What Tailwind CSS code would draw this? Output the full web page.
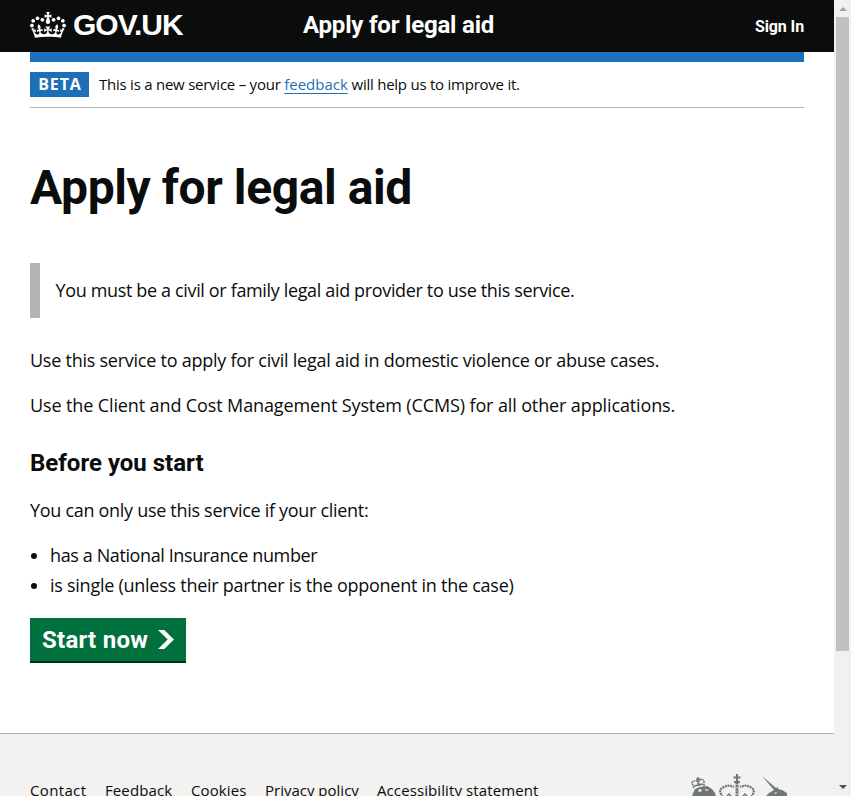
<!DOCTYPE html>
<html lang="en">
<head>
<meta charset="utf-8">
<title>Apply for legal aid</title>
<script src="https://cdn.jsdelivr.net/npm/@tailwindcss/browser@4"></script>
</head>
<body class="flex h-[796px] w-[851px] overflow-hidden bg-white font-['Open_Sans',sans-serif] text-[18px] leading-[25px] text-[#0b0c0c]">
<div class="flex w-[834px] shrink-0 flex-col">
  <header class="h-[52px] shrink-0 bg-[#0b0c0c] px-[30px] text-white">
    <div class="flex h-full items-start">
      <a class="flex w-[273px] shrink-0 items-start whitespace-nowrap">
        <svg class="mt-[12px] h-[26px] w-[36px] shrink-0" viewBox="0 0 132 97" preserveAspectRatio="none" fill="currentColor"><path fill-rule="evenodd" d="M25 30.2c3.5 1.5 7.7-.2 9.1-3.7 1.5-3.6-.2-7.8-3.9-9.2-3.6-1.4-7.6.3-9.1 3.9-1.4 3.5.3 7.5 3.9 9zM9 39.5c3.6 1.5 7.8-.2 9.2-3.7 1.5-3.6-.2-7.8-3.9-9.1-3.6-1.5-7.6.2-9.1 3.8-1.4 3.5.3 7.5 3.8 9zM4.4 57.2c3.5 1.5 7.7-.2 9.1-3.8 1.5-3.6-.2-7.7-3.9-9.1-3.5-1.5-7.6.3-9.1 3.8-1.4 3.5.3 7.6 3.9 9.1zm38.3-21.4c3.5 1.5 7.7-.2 9.1-3.8 1.5-3.6-.2-7.7-3.9-9.1-3.6-1.5-7.6.3-9.1 3.8-1.3 3.6.4 7.7 3.9 9.1zm64.4-5.6c-3.6 1.5-7.8-.2-9.1-3.7-1.5-3.6.2-7.8 3.8-9.2 3.6-1.4 7.7.3 9.2 3.9 1.3 3.5-.4 7.5-3.9 9zm15.9 9.3c-3.6 1.5-7.7-.2-9.1-3.7-1.5-3.6.2-7.8 3.7-9.1 3.6-1.5 7.7.2 9.2 3.8 1.5 3.5-.3 7.5-3.8 9zm4.7 17.7c-3.6 1.5-7.8-.2-9.2-3.8-1.5-3.6.2-7.7 3.9-9.1 3.6-1.5 7.7.3 9.2 3.8 1.3 3.5-.4 7.6-3.9 9.1zM89.3 35.8c-3.6 1.5-7.8-.2-9.2-3.8-1.4-3.6.2-7.7 3.9-9.1 3.6-1.5 7.7.3 9.2 3.8 1.4 3.6-.3 7.7-3.9 9.1zM69.7 17.7l8.9 4.7V9.3l-8.9 2.8c-.2-.3-.5-.6-.9-.9L72.4 0H59.6l3.5 11.2c-.3.3-.6.5-.9.9l-8.8-2.8v13.1l8.8-4.7c.3.3.6.7.9.9l-5 15.4v.1c-.2.8-.4 1.6-.4 2.4 0 4.1 3.1 7.5 7 8.1h.2c.3 0 .7.1 1 .1.4 0 .7 0 1-.1h.2c4-.6 7.1-4.1 7.1-8.1 0-.8-.1-1.7-.4-2.4V34l-5.1-15.4c.4-.2.7-.6 1-.9zM66 92.8c16.9 0 32.8 1.1 47.1 3.2 4-16.9 8.9-26.7 14-33.5l-9.6-3.4c1 4.9 1.1 7.2 0 10.2-1.5-1.4-3-4.3-4.2-8.7L108.6 76c2.8-2 5-3.2 7.5-3.3-4.4 9.4-10 11.9-13.6 11.2-4.3-.8-6.3-4.6-5.6-7.9 1-4.7 5.7-5.9 8-.5 4.3-8.7-3-11.4-7.6-8.8 7.1-7.2 7.9-13.5 2.1-21.1-8 6.1-8.1 12.3-4.5 20.8-4.7-5.4-12.1-2.5-9.5 6.2 3.4-5.2 7.9-2 7.2 3.1-.6 4.3-6.4 7.8-13.5 7.2-10.3-.9-10.9-8-11.2-13.8 2.5-.5 7.1 1.8 11 7.3L80.2 60c-4.1 4.4-8 5.3-12.3 5.4 1.4-4.4 8-11.6 8-11.6H55.5s6.4 7.2 7.9 11.6c-4.2-.1-8-1-12.3-5.4l1.4 16.4c3.9-5.5 8.5-7.7 10.9-7.3-.3 5.8-.9 12.8-11.1 13.8-7.2.6-12.9-2.9-13.5-7.2-.7-5 3.8-8.3 7.1-3.1 2.7-8.7-4.6-11.6-9.4-6.2 3.7-8.5 3.6-14.7-4.6-20.8-5.8 7.6-5 13.9 2.2 21.1-4.7-2.6-11.9.1-7.7 8.8 2.3-5.5 7.1-4.2 8.1.5.7 3.3-1.3 7.1-5.7 7.9-3.5.7-9-1.8-13.5-11.2 2.5.1 4.7 1.3 7.5 3.3l-4.7-15.4c-1.2 4.4-2.7 7.2-4.3 8.7-1.1-3-.9-5.3 0-10.2l-9.5 3.4c5 6.9 9.9 16.7 14 33.5 14.8-2.1 30.8-3.2 47.7-3.2z"/></svg>
        <span class="ml-[7px] mt-[10px] font-['Liberation_Sans',sans-serif] text-[30px] font-bold leading-[30px] tracking-[-1px]">GOV.UK</span>
      </a>
      <a class="mt-[10px] whitespace-nowrap font-[Roboto,sans-serif] text-[24px] font-bold leading-[30px] tracking-[-0.2px]">Apply for legal aid</a>
      <a class="ml-auto mt-[17px] whitespace-nowrap font-[Roboto,sans-serif] text-[16px] font-bold leading-[20px] tracking-[-0.1px]">Sign In</a>
    </div>
  </header>
  <div class="mx-[30px] h-[10px] shrink-0 bg-[#1d70b8]"></div>
  <div class="mx-[30px] flex h-[46px] shrink-0 items-start border-b border-[#b1b4b6] pt-[10px]">
    <strong class="flex h-[25px] w-[59px] justify-center bg-[#1d70b8] pt-[2px] text-[16px] font-bold leading-[20px] tracking-[0.9px] text-white"><span class="-mr-[1px]">BETA</span></strong>
    <p class="ml-[10px] mt-[2px] whitespace-pre text-[15px] leading-[20px] tracking-[-0.24px]"><span>This is a new service – your </span><a class="tracking-normal text-[#1d70b8] underline decoration-1 underline-offset-[3px]">feedback</a><span> will help us to improve it.</span></p>
  </div>
  <main class="flex grow flex-col whitespace-nowrap px-[30px] pt-[55px]">
    <h1 class="font-[Roboto,sans-serif] text-[48px] font-bold leading-[50px] tracking-[-0.42px]">Apply for legal aid</h1>
    <div class="mt-[50px] flex h-[55px] items-center border-l-[10px] border-[#b1b4b6] pl-[15.500px] tracking-[-0.35px]">You must be a civil or family legal aid provider to use this service.</div>
    <p class="mt-[30px] tracking-[-0.25px]">Use this service to apply for civil legal aid in domestic violence or abuse cases.</p>
    <p class="mt-[20px] tracking-[-0.12px]">Use the Client and Cost Management System (CCMS) for all other applications.</p>
    <h2 class="mt-[30px] font-[Roboto,sans-serif] text-[24px] font-bold leading-[30px]">Before you start</h2>
    <p class="mt-[20px] tracking-[-0.3px]">You can only use this service if your client:</p>
    <ul class="mt-[20px] flex list-disc flex-col gap-[5px] pl-[20px]">
      <li class="tracking-[-0.39px]">has a National Insurance number</li>
      <li class="tracking-[-0.26px]">is single (unless their partner is the opponent in the case)</li>
    </ul>
    <a class="mt-[20px] flex h-[43px] w-[156px] items-center bg-[#00703c] pl-[12px] font-[Roboto,sans-serif] text-[24px] font-bold leading-[24px] tracking-[0.25px] text-white shadow-[0_2px_0_#002d18]">Start now
      <svg class="ml-[10px] h-[19px] w-[16px]" viewBox="0 0 33 40" preserveAspectRatio="none" fill="currentColor"><path d="M0 0h13l20 20-20 20H0l20-20z"/></svg>
    </a>
  </main>
  <footer class="flex h-[63px] shrink-0 items-start overflow-hidden border-t border-[#b1b4b6] bg-[#f3f2f1] px-[30px]">
    <nav class="mt-[46px] flex whitespace-nowrap text-[15px] leading-[20px] tracking-[0.1px]">
      <a class="w-[75px] tracking-[0.35px]">Contact</a><a class="w-[86px]">Feedback</a><a class="w-[74px]">Cookies</a><a class="w-[112px] tracking-normal">Privacy policy</a><a>Accessibility statement</a>
    </nav>
    <svg class="ml-auto mr-[16px] mt-[39px] h-[24px] w-[98px] shrink-0" viewBox="0 0 98 24" fill="#6f777b">
      <path d="M2 24l1-4 2-4 5-2 7-1 5 3 3 4 1 4z"/>
      <g fill="none" stroke="#6f777b" stroke-width="1.500"><path d="M4 15L2 10q1-3 5-2l2 5 0-6q5-2 5 2l0 5" stroke-dasharray="2 .6"/><path d="M6 6h4M8 4v4M4 13l9-2"/></g>
      <path fill="#f3f2f1" d="M8 17l3-1 1 2-3 1zm7-1l4 1-3 1z"/>
      <g fill="none" stroke="#6f777b">
        <path stroke-width="2.200" stroke-dasharray="2 .7" d="M33 24q-5-6-1-9 6-4 12-1M61 24q5-6 1-9-6-4-12-1"/>
        <path stroke-width="3" d="M47 9v15" stroke-dasharray="2.500 .6"/>
        <path stroke-width="2" d="M43.500 4.500h7M47 1v7M44 9h6"/>
        <path stroke-width="1.500" d="M37 23l2-2 2 2M53 23l2-2 2 2"/>
      </g>
      <path d="M72 3l14 12 2-1 0 2 4 1 5 3 0 4H75l4-4 5-3z"/>
      <path fill="#f3f2f1" d="M84 20l3-1-1 2z"/>
    </svg>
  </footer>
</div>
<aside class="flex w-[17px] shrink-0 flex-col items-center bg-[#f1f1f1]">
  <div class="flex h-[17px] shrink-0 items-center justify-center"><svg class="h-[4px] w-[8px]" viewBox="0 0 8 4"><path fill="#a3a3a3" d="M0 4l4-4 4 4z"/></svg></div>
  <div class="h-[634px] w-[13px] shrink-0 bg-[#c1c1c1]"></div>
  <div class="mt-auto flex h-[19px] shrink-0 items-center justify-center"><svg class="h-[4px] w-[8px]" viewBox="0 0 8 4"><path fill="#505050" d="M0 0l4 4 4-4z"/></svg></div>
</aside>
</body>
</html>
